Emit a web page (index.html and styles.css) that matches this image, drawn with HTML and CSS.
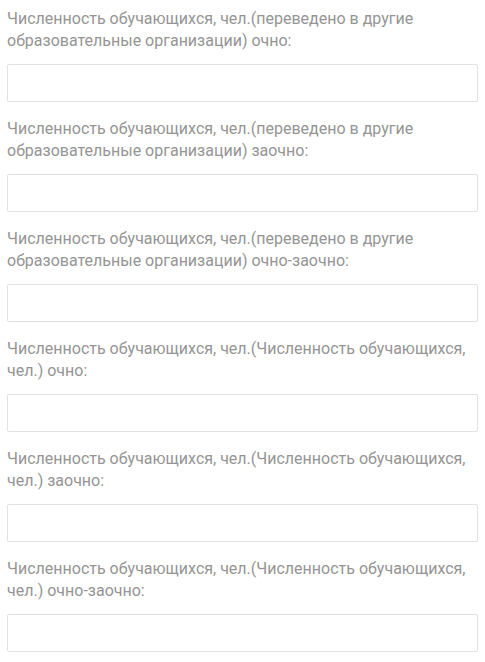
FILE: index.html
```html
<!DOCTYPE html>
<html lang="ru">
<head>
<meta charset="utf-8">
<link rel="stylesheet" href="styles.css">
</head>
<body>
<div class="form">
  <div class="field">
    <label class="label">Численность обучающихся, чел.(переведено в другие образовательные организации) очно:</label>
    <input class="input" type="text">
  </div>
  <div class="field">
    <label class="label">Численность обучающихся, чел.(переведено в другие образовательные организации) заочно:</label>
    <input class="input" type="text">
  </div>
  <div class="field">
    <label class="label">Численность обучающихся, чел.(переведено в другие образовательные организации) очно-заочно:</label>
    <input class="input" type="text">
  </div>
  <div class="field">
    <label class="label">Численность обучающихся, чел.(Численность обучающихся, чел.) очно:</label>
    <input class="input" type="text">
  </div>
  <div class="field">
    <label class="label">Численность обучающихся, чел.(Численность обучающихся, чел.) заочно:</label>
    <input class="input" type="text">
  </div>
  <div class="field">
    <label class="label">Численность обучающихся, чел.(Численность обучающихся, чел.) очно-заочно:</label>
    <input class="input" type="text">
  </div>
</div>
</body>
</html>
```
FILE: styles.css
```css
html, body {
  margin: 0;
  padding: 0;
  background: #fff;
}
.form {
  display: flex;
  flex-direction: column;
  gap: 16px;
  padding: 8px 7px 0 7px;
  width: 471px;
  font-family: Roboto, "Liberation Sans", sans-serif;
}
.field {
  display: flex;
  flex-direction: column;
  gap: 12px;
}
.label {
  font-size: 16px;
  line-height: 22px;
  color: #959595;
}
.input {
  box-sizing: border-box;
  height: 38px;
  width: 100%;
  margin: 0;
  border: 1px solid #e2e2e2;
  border-radius: 2px;
  background: #fff;
  outline: none;
}
```
